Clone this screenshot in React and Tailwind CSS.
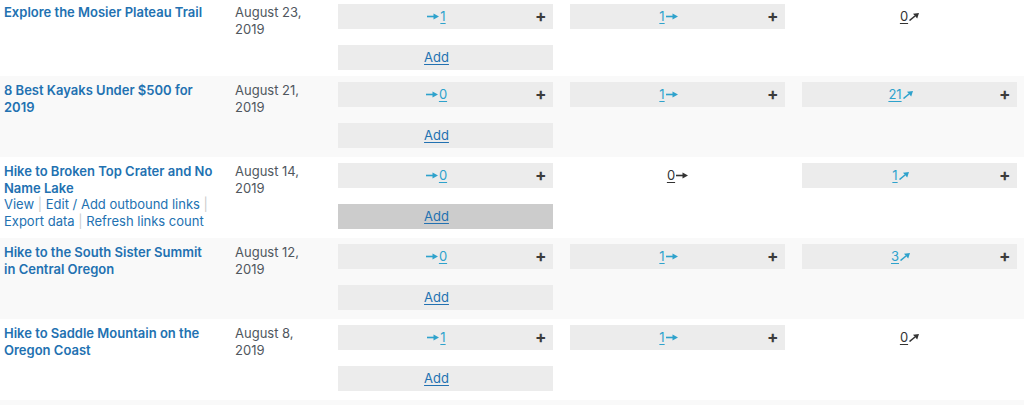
const posts = [
  { title: 'Explore the Mosier Plateau Trail', date: ['August 23,', '2019'], out: 1, inb: 1, ext: 0 },
  { title: '8 Best Kayaks Under $500 for 2019', date: ['August 21,', '2019'], out: 0, inb: 1, ext: 21 },
  { title: 'Hike to Broken Top Crater and No Name Lake', date: ['August 14,', '2019'], out: 0, inb: 0, ext: 1, actions: true },
  { title: 'Hike to the South Sister Summit in Central Oregon', date: ['August 12,', '2019'], out: 0, inb: 1, ext: 3 },
  { title: 'Hike to Saddle Mountain on the Oregon Coast', date: ['August 8,', '2019'], out: 1, inb: 1, ext: 0 },
]

function RightArrow({ className }) {
  return (
    <svg width="12" height="7" viewBox="0 0 12 7" className={className}>
      <path d="M0 3.5h7" stroke="currentColor" strokeWidth="1.6" />
      <path d="M6.5 0.5L12 3.5L6.5 6.5z" fill="currentColor" />
    </svg>
  )
}

function ExtArrow({ className }) {
  return (
    <svg width="10" height="8" viewBox="0 0 10 8" className={className}>
      <path d="M0.5 7.5L6 3" stroke="currentColor" strokeWidth="1.6" />
      <path d="M4 0.8L10 0L8.2 5.4z" fill="currentColor" />
    </svg>
  )
}

function Count({ value, type, dark }) {
  const color = dark ? 'text-[#333]' : 'text-[#2ea2cc]'
  const num = <span className="underline underline-offset-2">{value}</span>
  if (type === 'out') {
    return (
      <a href="#" className={`inline-flex items-center gap-[1px] ${color}`}>
        <RightArrow />
        {num}
      </a>
    )
  }
  return (
    <a href="#" className={`inline-flex items-center gap-[1px] ${color}`}>
      {num}
      {type === 'in' ? <RightArrow /> : <ExtArrow />}
    </a>
  )
}

function CountBox({ value, type }) {
  if (value === 0 && type !== 'out') {
    return (
      <div className="w-[215px] h-[25px] flex items-center justify-center">
        <Count value={value} type={type} dark />
      </div>
    )
  }
  return (
    <div className="w-[215px] h-[25px] bg-[#ececec] flex items-center">
      <div className="flex-1 flex justify-center">
        <Count value={value} type={type} />
      </div>
      <span className="w-[18px] text-[17px] leading-none font-bold text-[#3c3c3c]">+</span>
    </div>
  )
}

function Row({ post, shaded, first }) {
  return (
    <div
      className={`grid grid-cols-[227px_103px_232px_232px_230px] ${first ? 'h-[78px]' : 'h-[81px]'} ${shaded ? 'bg-[#f9f9f9]' : 'bg-white'}`}
    >
      <div className="pl-[4px] pt-[6px] pr-[13px] leading-[16.7px]">
        <a href="#" className="font-semibold text-[#2271b1]">{post.title}</a>
        {post.actions && (
          <div className="text-[#2271b1]">
            <a href="#">View</a> <span className="text-[#ccc]">|</span>{' '}
            <a href="#">Edit / Add outbound links</a> <span className="text-[#ccc]">|</span>{' '}
            <a href="#">Export data</a> <span className="text-[#ccc]">|</span>{' '}
            <a href="#">Refresh links count</a>
          </div>
        )}
      </div>
      <div className="pl-[8px] pt-[6px] leading-[16.7px] text-[#50575e]">
        <div>{post.date[0]}</div>
        <div>{post.date[1]}</div>
      </div>
      <div className="pl-[8px] pt-[6px] flex flex-col gap-[16px]">
        <CountBox value={post.out} type="out" />
        <div
          className={`w-[215px] h-[25px] ${post.actions ? 'bg-[#cccccc]' : 'bg-[#ececec]'} flex items-center justify-center pr-[18px]`}
        >
          <a href="#" className="text-[#2271b1] underline underline-offset-2">Add</a>
        </div>
      </div>
      <div className="pl-[8px] pt-[6px]">
        <CountBox value={post.inb} type="in" />
      </div>
      <div className="pl-[8px] pt-[6px]">
        <CountBox value={post.ext} type="ext" />
      </div>
    </div>
  )
}

export default function App() {
  return (
    <div
      className="w-[1024px] h-[405px] overflow-hidden bg-white text-[13px]"
      style={{ fontFamily: 'Inter, "Liberation Sans", sans-serif' }}
    >
      <div className="-mt-[2px]">
        {posts.map((post, i) => (
          <Row key={post.title} post={post} shaded={i % 2 === 1} first={i === 0} />
        ))}
        <div className="h-[81px] bg-[#f9f9f9]" />
      </div>
    </div>
  )
}
